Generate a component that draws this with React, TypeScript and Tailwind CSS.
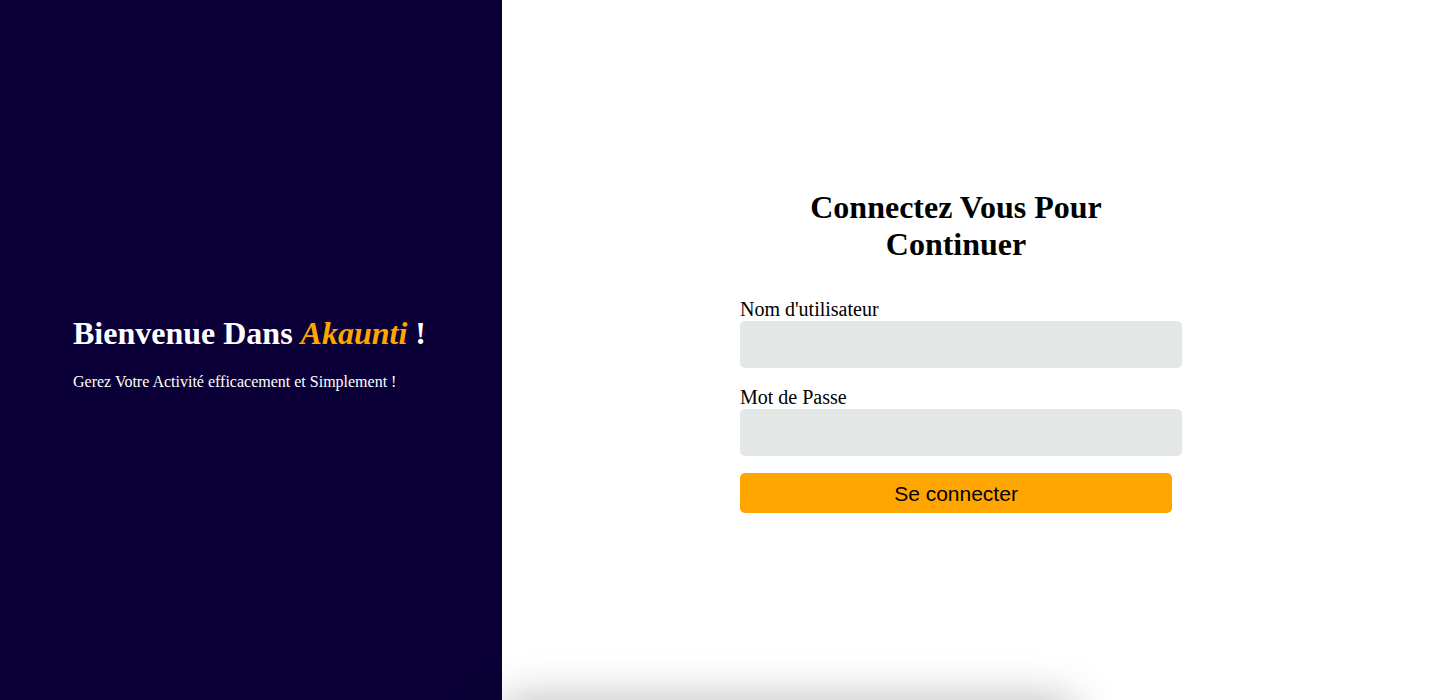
export default function App() {
  return (
    <div className="flex min-h-screen w-full font-['Liberation_Serif','Times_New_Roman',serif]">
      {/* Welcome panel */}
      <div className="w-[502px] shrink-0 bg-[#0a0037] pl-[73px] text-white">
        <div className="flex h-[700px] flex-col justify-center pt-[6px]">
          <h1 className="text-[32px] font-bold leading-[1.15]">
            Bienvenue Dans <span className="italic text-[#ffa500]">Akaunti</span> !
          </h1>
          <p className="mt-[21px] text-[16px] leading-[1.15]">
            Gerez Votre Activité efficacement et Simplement !
          </p>
        </div>
      </div>

      {/* Login panel */}
      <div className="flex flex-1 flex-col bg-white">
        <div className="flex h-[700px] flex-col justify-center pl-[238px]">
          <div className="w-[432px]">
            <h1 className="mt-[2px] text-center text-[32px] font-bold leading-[1.15] text-black">
              Connectez Vous Pour Continuer
            </h1>
            <form className="mt-[36px] flex flex-col" onSubmit={(e) => e.preventDefault()}>
              <label className="text-[20px] leading-[1.15] text-black">Nom d'utilisateur</label>
              <input
                type="text"
                className="h-[47px] w-[442px] rounded-[5px] bg-[#e3e8e6] px-[5px] outline-none"
              />
              <label className="mt-[18px] text-[20px] leading-[1.15] text-black">Mot de Passe</label>
              <input
                type="password"
                className="h-[47px] w-[442px] rounded-[5px] bg-[#e3e8e6] px-[5px] outline-none"
              />
              <button
                type="submit"
                className="mt-[17px] h-[40px] w-[432px] rounded-[5px] bg-[#ffa500] font-['Liberation_Sans',Arial,sans-serif] text-[21px] text-black"
              >
                Se connecter
              </button>
            </form>
          </div>
        </div>
        <div className="h-[100px] w-[570px] bg-white shadow-[0_0_45px_rgba(0,0,0,0.28)]" />
      </div>
    </div>
  );
}
